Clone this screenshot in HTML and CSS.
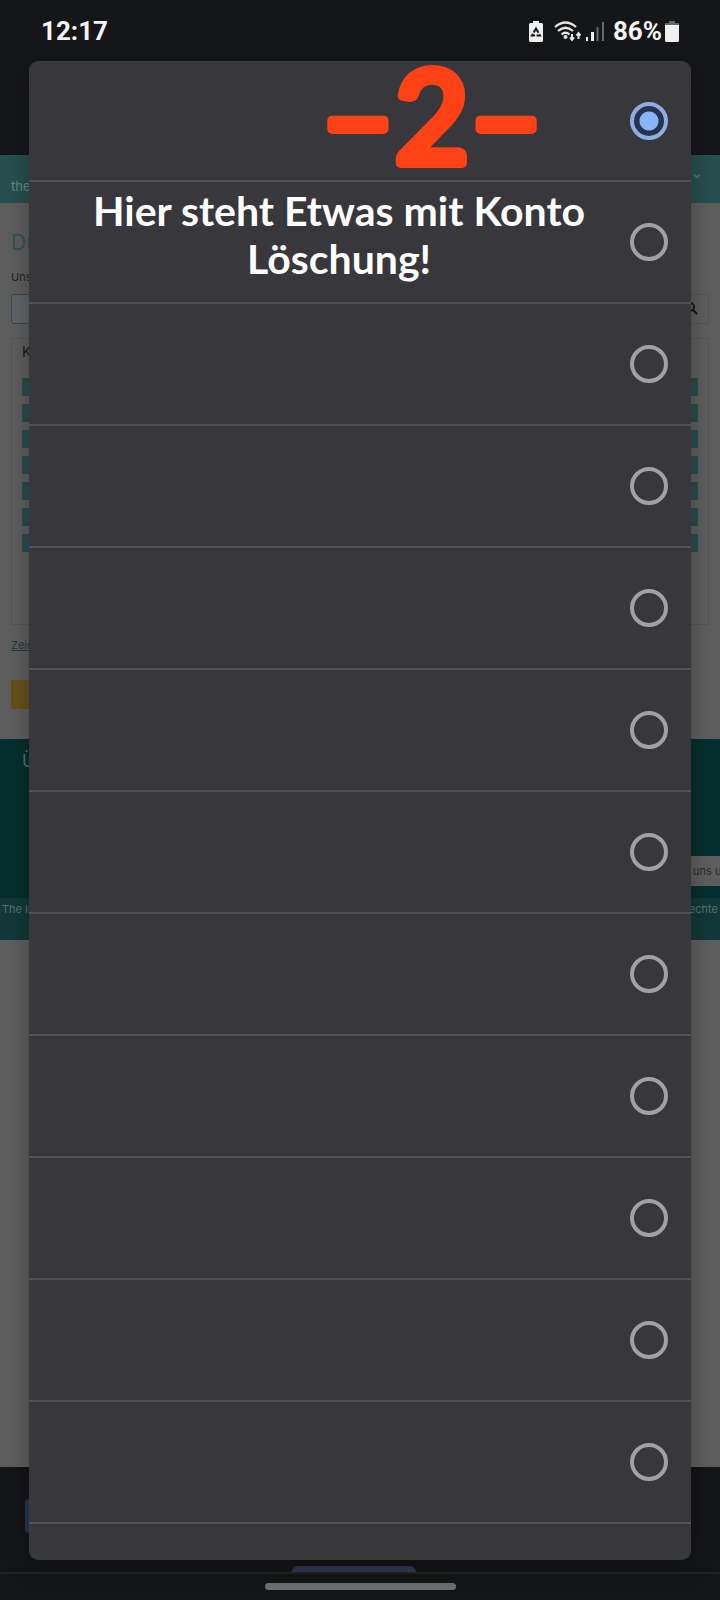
FILE: index.html
```html
<!DOCTYPE html>
<html lang="de">
<head>
<meta charset="UTF-8">
<meta name="viewport" content="width=device-width, initial-scale=1">
<title>Auswahl</title>
<link rel="stylesheet" href="styles.css">
</head>
<body>

    <div class="screen">
        <header class="top-bar">
            <span class="clock">12:17</span>
            <div class="status-icons">
                <svg width="14" height="21" viewBox="0 0 14 21">
                    <path fill="#f0f0f0" d="M4 0h6v2h2.500q1.500 0 1.500 1.500v16q0 1.500-1.500 1.500h-11q-1.500 0-1.500-1.500v-16q0-1.500 1.500-1.500h2.500z"/>
                    <path fill="none" stroke="#17181a" stroke-width="2" stroke-dasharray="5 1.500" d="M7 7.500l4 7h-8z"/>
                </svg>
                <svg class="wifi" width="28" height="21" viewBox="0 0 28 21">
                    <g fill="none" stroke="#e6e6e6" stroke-width="2.300">
                        <path d="M1 6q10.500-9 21 0"/>
                        <path d="M4 10q7.500-6.500 15 0"/>
                        <path d="M7.500 13.500q4-3.500 8 0"/>
                    </g>
                    <circle cx="11.500" cy="16" r="2" fill="#e6e6e6"/>
                    <path fill="none" stroke="#e6e6e6" stroke-width="2" d="M18 13v6M16 16.500l2 2.500 2-2.500M24.500 18v-6M22.500 14.500l2-2.500 2 2.500"/>
                </svg>
                <svg width="18" height="20" viewBox="0 0 18 20">
                    <path fill="#f0f0f0" d="M0 16h2v4h-2zM5 11h3v9h-3z"/>
                    <path fill="#66686a" d="M10.500 6h2v14h-2zM16 1h2v19h-2z"/>
                </svg>
                <span class="percent">86%</span>
                <svg width="14" height="21" viewBox="0 0 14 21">
                    <path fill="#66686a" d="M4 0h6v2h3q1 0 1 1v2h-14v-2q0-1 1-1h3z"/>
                    <path fill="#f0f0f0" d="M0 4h14v15.500q0 1.500-1.500 1.500h-11q-1.500 0-1.500-1.500z"/>
                </svg>
            </div>
        </header>

        <!-- Webseite hinter dem Dialog -->
        <main class="site">
            <nav class="site-nav">
                <span>the</span>
                <svg width="8" height="5" viewBox="0 0 8 5"><path fill="none" stroke="#507372" stroke-width="2" d="M1 1l3 2 3-2"/></svg>
            </nav>
            <section class="content">
                <h1>Du</h1>
                <label for="search">Uns</label>
                <div class="search">
                    <input type="text" id="search">
                    <button aria-label="Suchen">
                        <svg width="14" height="14" viewBox="0 0 14 14"><g fill="none" stroke="#161616" stroke-width="2"><circle cx="4" cy="6" r="4"/><path d="M7 9l4 4"/></g></svg>
                    </button>
                </div>
                <div class="card">
                    <h2>K</h2>
                    <div class="bar"></div>
                    <div class="bar"></div>
                    <div class="bar"></div>
                    <div class="bar"></div>
                    <div class="bar"></div>
                    <div class="bar"></div>
                    <div class="bar"></div>
                </div>
                <a class="more" href="#">Zeic</a>
                <div class="submit"></div>
            </section>
            <footer class="site-footer">
                <h2>Ü</h2>
                <button class="contact">uns u</button>
                <div class="legal"><span>The In</span><span>echte</span></div>
            </footer>
        </main>

        <div class="bottom-bar">
            <div class="bottom-button"></div>
            <div class="tab"></div>
            <div class="home-area"><div class="home-pill"></div></div>
        </div>
    </div>

    <form class="dialog">
        <label class="option">
            <svg class="number" width="260" height="119" viewBox="0 0 260 119"><text x="124" y="102">–2–</text></svg>
            <input type="radio" name="option" checked>
        </label>
        <label class="option"><span class="note">Hier steht Etwas mit Konto Löschung!</span><input type="radio" name="option"></label>
        <label class="option"><input type="radio" name="option" aria-label="Option 3"></label>
        <label class="option"><input type="radio" name="option" aria-label="Option 4"></label>
        <label class="option"><input type="radio" name="option" aria-label="Option 5"></label>
        <label class="option"><input type="radio" name="option" aria-label="Option 6"></label>
        <label class="option"><input type="radio" name="option" aria-label="Option 7"></label>
        <label class="option"><input type="radio" name="option" aria-label="Option 8"></label>
        <label class="option"><input type="radio" name="option" aria-label="Option 9"></label>
        <label class="option"><input type="radio" name="option" aria-label="Option 10"></label>
        <label class="option"><input type="radio" name="option" aria-label="Option 11"></label>
        <label class="option"><input type="radio" name="option" aria-label="Option 12"></label>
    </form>

</body>
</html>
```
FILE: styles.css
```css
* {
    box-sizing: border-box;
}
body {
    margin: 0;
    background-color: #5e5e5e;
    font-family: Inter, sans-serif;
}
h1, h2 {
    margin: 0;
    font-weight: normal;
}
.screen {
    display: flex;
    flex-direction: column;
    min-height: 100vh;
    overflow: hidden;
}

/* Statusleiste */
.top-bar {
    display: flex;
    justify-content: space-between;
    align-items: flex-start;
    height: 155px;
    padding: 15px 41px;
    background-color: #151618;
    color: #f4f4f4;
    font-family: Roboto, sans-serif;
    font-size: 26px;
    font-weight: bold;
    line-height: 32px;
}
.status-icons {
    display: flex;
    align-items: center;
    height: 32px;
}
.wifi {
    margin: 0 4px 0 11px;
}
.percent {
    margin: 0 3px 0 9px;
}

/* Webseite */
.site {
    flex: 1;
    font-size: 12px;
    color: #252525;
}
.site-nav {
    display: flex;
    justify-content: space-between;
    align-items: center;
    height: 48px;
    padding: 14px 19px 0 11px;
    background-color: #264f4e;
    color: #6e8584;
    font-size: 13px;
}
.site-nav svg {
    margin-bottom: 20px;
}
.content {
    height: 536px;
    padding: 24px 11px;
}
.content h1 {
    color: #2b5553;
    font-size: 21px;
    line-height: 32px;
}
.content label {
    display: block;
    margin-top: 8px;
    line-height: 20px;
    font-size: 11px;
}
.search {
    display: flex;
    height: 30px;
    margin-top: 7px;
}
.search input {
    flex: 1;
    min-width: 0;
    background-color: #626365;
    border: 1px solid #354657;
    border-radius: 3px;
}
.search button {
    width: 34px;
    padding: 0 10px;
    background: none;
    border: 1px solid #555;
}
.card {
    display: flex;
    flex-direction: column;
    gap: 8px;
    height: 287px;
    margin-top: 14px;
    padding: 3px 10px;
    border: 1px solid #555;
}
.card h2 {
    height: 28px;
    font-size: 14px;
    line-height: 20px;
    color: #101c1c;
}
.bar {
    height: 18px;
    background-color: #294d4b;
}
.more {
    display: block;
    margin-top: 10px;
    line-height: 20px;
    font-size: 11px;
    color: #1f3b3a;
}
.submit {
    width: 120px;
    height: 29px;
    margin-top: 25px;
    background-color: #68501c;
}
.site-footer {
    display: flex;
    flex-direction: column;
    height: 201px;
    background-color: #052f2e;
    color: #557170;
}
.site-footer h2 {
    height: 117px;
    padding: 10px 22px;
    font-size: 17px;
    line-height: 24px;
}
.contact {
    align-self: flex-end;
    width: 100px;
    height: 30px;
    padding: 0 0 0 45px;
    margin-right: -28px;
    border: none;
    background-color: #5e5e5e;
    color: #252d2d;
    font-family: inherit;
    font-size: 11px;
    text-align: left;
    white-space: nowrap;
}
.legal {
    display: flex;
    justify-content: space-between;
    margin-top: auto;
    height: 42px;
    padding: 0 2px;
    background-color: #123837;
    font-size: 11px;
    line-height: 22px;
}

/* Untere Leiste */
.bottom-bar {
    display: flex;
    flex-direction: column;
    align-items: center;
    height: 133px;
    padding-top: 32px;
    background-color: #141516;
}
.bottom-button {
    align-self: flex-start;
    width: 120px;
    height: 34px;
    margin-left: 25px;
    border-radius: 4px;
    background-color: #233651;
}
.tab {
    width: 124px;
    height: 6px;
    margin: 33px 12px 0 0;
    border-radius: 6px 6px 0 0;
    background-color: #2d3b50;
}
.home-area {
    align-self: stretch;
    padding-top: 9px;
    border-top: 2px solid #222324;
}
.home-pill {
    width: 191px;
    height: 7px;
    margin: 0 auto;
    border-radius: 4px;
    background-color: #6d6d6d;
}

/* Auswahldialog */
.dialog {
    position: absolute;
    top: 61px;
    left: 29px;
    right: 29px;
    padding-bottom: 36px;
    border-radius: 9px;
    background-color: #38373c;
    box-shadow: 0 6px 24px rgba(0, 0, 0, 0.3);
}
.option {
    display: flex;
    align-items: center;
    height: 122px;
    padding: 0 23px;
    border-bottom: 2px solid #505055;
}
.option:first-child {
    height: 121px;
}
.option input {
    appearance: none;
    flex: none;
    width: 38px;
    height: 38px;
    margin: 0 0 0 auto;
    border: 4px solid #a0a0a5;
    border-radius: 50%;
}
.option input:checked {
    border-color: #91ade0;
    background: radial-gradient(circle, #8ab4f8 9px, #26344f 10px);
}
.number {
    margin-left: 256px;
    overflow: visible;
    fill: #ff4215;
    stroke: #ff4215;
    stroke-width: 10px;
    stroke-linejoin: round;
    text-anchor: middle;
    font-family: Lato, sans-serif;
    font-size: 128px;
}
.note {
    flex: 1;
    padding: 0 32px 14px 28px;
    color: #fff;
    font-family: Lato, sans-serif;
    font-size: 41px;
    font-weight: bold;
    line-height: 48px;
    text-align: center;
}
```
